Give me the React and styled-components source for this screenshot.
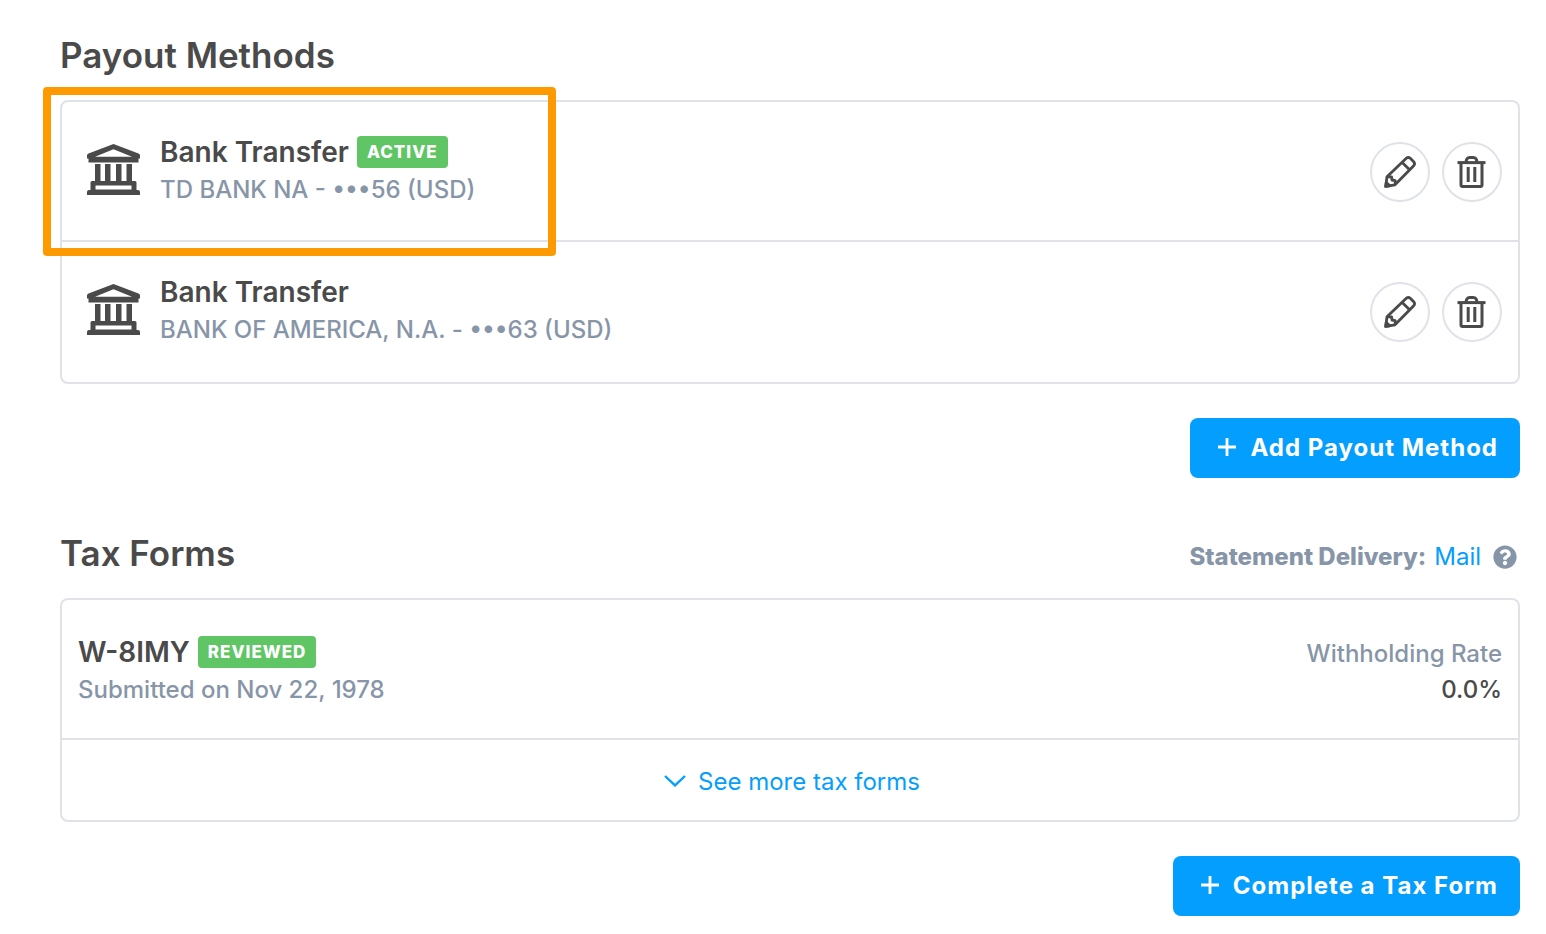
import styled, { createGlobalStyle } from "styled-components";
import { FaQuestionCircle } from "react-icons/fa";

const payoutMethods = [
  { id: 1, name: "Bank Transfer", detail: "TD BANK NA - •••56 (USD)", active: true },
  { id: 2, name: "Bank Transfer", detail: "BANK OF AMERICA, N.A. - •••63 (USD)" },
];

const BankIcon = () => (
  <svg width="54" height="52" viewBox="0 0 54 52" fill="currentColor" aria-hidden="true">
    <path
      fillRule="evenodd"
      d="M26.5 0 L51.5 9.5 Q53 10 53 11.5 V14.5 H51.5 V18.5 H1.5 V14.5 H0 V11.5 Q0 10 1.5 9.5 Z M26.5 5.3 L8 12.8 H45 Z"
    />
    <path
      fillRule="evenodd"
      d="M8 20 H13.5 V37 H18 V20 H23.5 V37 H29 V20 H34.5 V37 H39.5 V20 H45 V37 H48 Q49.5 37 49.5 38.5 V46 H51 Q53 46 53 48 V51 H0 V48 Q0 46 2 46 H3.5 V38.5 Q3.5 37 5 37 H8 Z M8.5 41.5 V45.5 H44.5 V41.5 Z"
    />
  </svg>
);

const PencilIcon = () => (
  <svg width="34" height="34" viewBox="-1 -1 34 34" fill="none" stroke="currentColor" strokeWidth="2.8" strokeLinejoin="round" aria-hidden="true">
    <path d="M1.7 30.4 L3 20.8 L22.3 2.3 Q24.3 .6 26.3 2.3 L29.7 5.7 Q31.4 7.7 29.7 9.7 L11 28.8 Z" />
    <path d="M18.2 6.4 L25.6 13.8" />
    <path d="M3.4 20.8 L7.6 20.8 L8 24 L11.2 24.6 L11.2 28.4" />
    <path d="M1.7 30.4 L2.3 26.5 L5.8 29.8 Z" fill="currentColor" />
  </svg>
);

const TrashIcon = () => (
  <svg width="30" height="34" viewBox="-.5 -1 30 34" fill="none" stroke="currentColor" strokeWidth="3" aria-hidden="true">
    <path d="M0 6.6 H28" />
    <path d="M8.4 6 L9.2 3.4 Q10 1.6 12 1.6 H16 Q18 1.6 18.8 3.4 L19.6 6" />
    <path d="M3.5 7 V28.8 Q3.5 30.5 5.2 30.5 H22.8 Q24.5 30.5 24.5 28.8 V7" />
    <path d="M10.7 11 V26 M17.3 11 V26" />
  </svg>
);

const PlusIcon = () => (
  <svg width="18" height="18" viewBox="0 0 18 18" fill="none" stroke="currentColor" strokeWidth="2.8" aria-hidden="true">
    <path d="M9 0 V18 M0 9 H18" />
  </svg>
);

const ChevronIcon = () => (
  <svg width="22" height="12" viewBox="0 0 22 12" fill="none" stroke="currentColor" strokeWidth="2.4" aria-hidden="true">
    <path d="M1 1 L11 10.4 L21 1" />
  </svg>
);

export default function App() {
  return (
    <>
      <GlobalStyle />
      <Page>
        <section>
          <SectionHeader>
            <Heading>Payout Methods</Heading>
          </SectionHeader>
          <Card>
            {payoutMethods.map((method) => (
              <MethodRow key={method.id}>
                <MethodIcon>
                  <BankIcon />
                </MethodIcon>
                <RowBody>
                  <RowTitle>
                    {method.name}
                    {method.active && <Badge>Active</Badge>}
                  </RowTitle>
                  <RowDetail>{method.detail}</RowDetail>
                </RowBody>
                <Actions>
                  <RoundButton type="button" aria-label="Edit">
                    <PencilIcon />
                  </RoundButton>
                  <RoundButton type="button" aria-label="Delete">
                    <TrashIcon />
                  </RoundButton>
                </Actions>
                {method.active && <Highlight />}
              </MethodRow>
            ))}
          </Card>
          <SectionFooter>
            <PrimaryButton type="button">
              <PlusIcon />
              Add Payout Method
            </PrimaryButton>
          </SectionFooter>
        </section>

        <section>
          <SectionHeader>
            <Heading>Tax Forms</Heading>
            <Delivery>
              <strong>Statement Delivery:</strong>
              <Link href="#delivery">Mail</Link>
              <HelpIcon />
            </Delivery>
          </SectionHeader>
          <Card>
            <FormRow>
              <RowBody>
                <RowTitle>
                  W-8IMY
                  <Badge>Reviewed</Badge>
                </RowTitle>
                <RowDetail>Submitted on Nov 22, 1978</RowDetail>
              </RowBody>
              <Rate>
                <RowDetail>Withholding Rate</RowDetail>
                <RowDetail $dark>0.0%</RowDetail>
              </Rate>
            </FormRow>
            <MoreRow>
              <Link href="#tax-forms">
                <ChevronIcon />
                See more tax forms
              </Link>
            </MoreRow>
          </Card>
          <SectionFooter>
            <PrimaryButton type="button">
              <PlusIcon />
              Complete a Tax Form
            </PrimaryButton>
          </SectionFooter>
        </section>
      </Page>
    </>
  );
}

const GlobalStyle = createGlobalStyle`
  * {
    box-sizing: border-box;
  }
  body {
    margin: 0;
    background: #fff;
    color: #4a4a4a;
    font-family: Inter, "Liberation Sans", sans-serif;
    -webkit-font-smoothing: antialiased;
  }
`;

const Page = styled.main`
  display: flex;
  flex-direction: column;
  gap: 52px;
  padding: 32px 26px 18px 60px;
`;

const SectionHeader = styled.header`
  display: flex;
  align-items: flex-end;
  justify-content: space-between;
  margin-bottom: 22px;
`;

const Heading = styled.h2`
  margin: 0;
  font-size: 35px;
  font-weight: 600;
  line-height: 46px;
`;

const Card = styled.div`
  border: 2px solid #dfe3e8;
  border-radius: 8px;
`;

const Row = styled.div`
  display: flex;
  align-items: flex-start;
  min-height: 140px;
`;

const MethodRow = styled(Row)`
  position: relative;
  padding: 30px 16px 30px 25px;
  &:not(:last-child) {
    border-bottom: 2px solid #dfe3e8;
  }
`;

const FormRow = styled(Row)`
  padding: 32px 16px 30px;
  border-bottom: 2px solid #dfe3e8;
`;

const MoreRow = styled.div`
  display: flex;
  align-items: center;
  justify-content: center;
  min-height: 80px;
  padding: 2px 0 0 4px;
`;

const MethodIcon = styled.div`
  display: flex;
  flex-shrink: 0;
  padding: 12px 19px 0 0;
`;

const RowBody = styled.div`
  flex: 1;
  min-width: 0;
`;

const RowTitle = styled.h3`
  display: flex;
  align-items: center;
  gap: 8px;
  margin: 0;
  font-size: 28px;
  font-weight: 600;
  line-height: 40px;
`;

const RowDetail = styled.p`
  margin: 0;
  color: ${({ $dark }) => ($dark ? "#4a4a4a" : "#8795a8")};
  font-size: 24px;
  font-weight: 500;
  line-height: 36px;
`;

const Badge = styled.span`
  padding: 0 10px;
  border-radius: 4px;
  background: #60c665;
  color: #fff;
  font-size: 17px;
  font-weight: 800;
  line-height: 32px;
  letter-spacing: 1px;
  text-transform: uppercase;
`;

const Actions = styled.div`
  display: flex;
  gap: 12px;
  padding-top: 10px;
`;

const RoundButton = styled.button`
  display: flex;
  align-items: center;
  justify-content: center;
  width: 60px;
  height: 60px;
  padding: 0;
  border: 2px solid #dfe3e8;
  border-radius: 50%;
  background: #fff;
  color: #4a4a4a;
  cursor: pointer;
`;

/* Frame laid over the active method, reaching a little past the card */
const Highlight = styled.div`
  position: absolute;
  top: -15px;
  left: -19px;
  width: 513px;
  height: 169px;
  border: 8px solid #ff9900;
  border-radius: 4px;
  pointer-events: none;
`;

const SectionFooter = styled.div`
  display: flex;
  justify-content: flex-end;
  margin-top: 34px;
`;

const PrimaryButton = styled.button`
  display: flex;
  align-items: center;
  gap: 14px;
  height: 60px;
  padding: 0 22px 2px 28px;
  border: none;
  border-radius: 8px;
  background: #049eff;
  color: #fff;
  font-family: inherit;
  font-size: 24px;
  font-weight: 700;
  letter-spacing: 1px;
  cursor: pointer;
`;

const Delivery = styled.div`
  display: flex;
  align-items: center;
  gap: 8px;
  padding-right: 3px;
  color: #8795a8;
  font-size: 24px;
  line-height: 38px;

  strong {
    font-weight: 800;
  }
`;

const Link = styled.a`
  display: inline-flex;
  align-items: center;
  gap: 12px;
  color: #049eff;
  font-size: 24px;
  text-decoration: none;
`;

const HelpIcon = styled(FaQuestionCircle)`
  width: 24px;
  height: 24px;
  margin-left: 4px;
`;

const Rate = styled.div`
  padding-top: 4px;
  text-align: right;
`;
